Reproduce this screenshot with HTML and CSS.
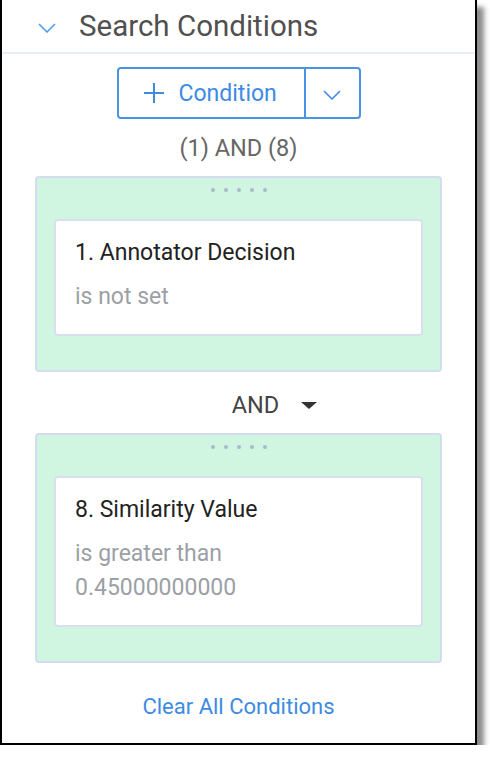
FILE: index.html
```html
<!DOCTYPE html>
<html lang="en">
<head>
  <meta charset="UTF-8" />
  <meta name="viewport" content="width=device-width, initial-scale=1.0" />
  <title>Search Conditions</title>
  <link rel="stylesheet" href="styles.css">
</head>
<body>
  <div class="panel">
    <div class="panel-header">
      <svg class="header-chevron" width="18" height="10" viewBox="0 0 18 10"><path d="M1 1l8 8 8-8" fill="none" stroke="currentColor" stroke-width="1.6"/></svg>
      <span class="panel-title">Search Conditions</span>
    </div>

    <div class="btn-row">
      <div class="btn-group">
        <button class="btn-add">
          <svg width="22" height="22" viewBox="0 0 22 22"><path d="M11 1v20M1 11h20" fill="none" stroke="currentColor" stroke-width="2"/></svg>
          <span>Condition</span>
        </button>
        <button class="btn-more">
          <svg width="18" height="10" viewBox="0 0 18 10"><path d="M1 1l8 8 8-8" fill="none" stroke="currentColor" stroke-width="1.6"/></svg>
        </button>
      </div>
    </div>

    <div class="logic">(1) AND (8)</div>

    <div class="group">
      <div class="handle"><i></i><i></i><i></i><i></i><i></i></div>
      <div class="card">
        <div class="card-title">1. Annotator Decision</div>
        <div class="card-desc">is not set</div>
      </div>
    </div>

    <div class="operator">
      <span>AND</span>
      <span class="caret"></span>
    </div>

    <div class="group">
      <div class="handle"><i></i><i></i><i></i><i></i><i></i></div>
      <div class="card">
        <div class="card-title">8. Similarity Value</div>
        <div class="card-desc">is greater than<br>0.45000000000</div>
      </div>
    </div>

    <div class="clear-row">
      <a class="clear-link" href="#">Clear All Conditions</a>
    </div>
  </div>
</body>
</html>
```

FILE: styles.css
```css
body {
  margin: 0;
  font-family: Roboto, 'Liberation Sans', sans-serif;
  background: white;
}
.panel {
  width: 473px;
  height: 743px;
  border: 2px solid #000;
  border-top: 0;
  background: white;
  box-shadow: 7px 7px 5px rgba(0, 0, 0, 0.45);
}
.panel-header {
  display: flex;
  align-items: center;
  height: 52px;
  border-bottom: 2px solid #e6eef8;
  padding-left: 36px;
}
.header-chevron {
  color: #4f9be6;
  margin-top: 4px;
}
.panel-title {
  margin-left: 23px;
  font-size: 29.5px;
  color: #505050;
}
.btn-row {
  display: flex;
  justify-content: center;
  margin-top: 13px;
}
.btn-group {
  display: flex;
  height: 52px;
}
.btn-group button {
  font-family: inherit;
  background: white;
  color: #3d8be2;
  border: 2px solid #4a92e4;
  display: flex;
  align-items: center;
  padding: 0;
  cursor: pointer;
}
.btn-add {
  width: 189px;
  border-radius: 4px 0 0 4px;
  padding-left: 24px !important;
  gap: 14px;
  font-size: 23px;
}
.btn-more {
  width: 55px;
  border-left: 0 !important;
  border-radius: 0 4px 4px 0;
  justify-content: center;
}
.btn-more svg {
  margin-top: 3px;
}
.logic {
  margin-top: 16px;
  text-align: center;
  font-size: 23.5px;
  line-height: 26px;
  color: #666;
}
.group {
  margin: 15px 33px 0;
  background: #d0f5e1;
  border: 2px solid #d3ddef;
  border-radius: 4px;
  padding: 10px 17px 34px;
}
.handle {
  display: flex;
  justify-content: center;
  gap: 9px;
  height: 4px;
  margin-bottom: 27px;
}
.handle i {
  width: 4px;
  height: 4px;
  border-radius: 50%;
  background: #abb8d0;
}
.card {
  background: white;
  border: 2px solid #d8e0ee;
  border-radius: 4px;
  padding: 17px 19px 20px;
}
.card-title {
  font-size: 23px;
  line-height: 30px;
  color: #222;
}
.card-desc {
  margin-top: 12px;
  font-size: 23px;
  line-height: 34px;
  color: #9c9fa6;
}
.operator {
  display: flex;
  justify-content: center;
  align-items: center;
  gap: 22px;
  margin: 20px 0 15px;
  padding-left: 72px;
  font-size: 23.5px;
  line-height: 26px;
  color: #444;
}
.caret {
  width: 0;
  height: 0;
  border-left: 8px solid transparent;
  border-right: 8px solid transparent;
  border-top: 7px solid #333;
}
.clear-row {
  margin-top: 31px;
  text-align: center;
  line-height: 26px;
}
.clear-link {
  font-size: 22px;
  color: #3d8be2;
  text-decoration: none;
}
```
